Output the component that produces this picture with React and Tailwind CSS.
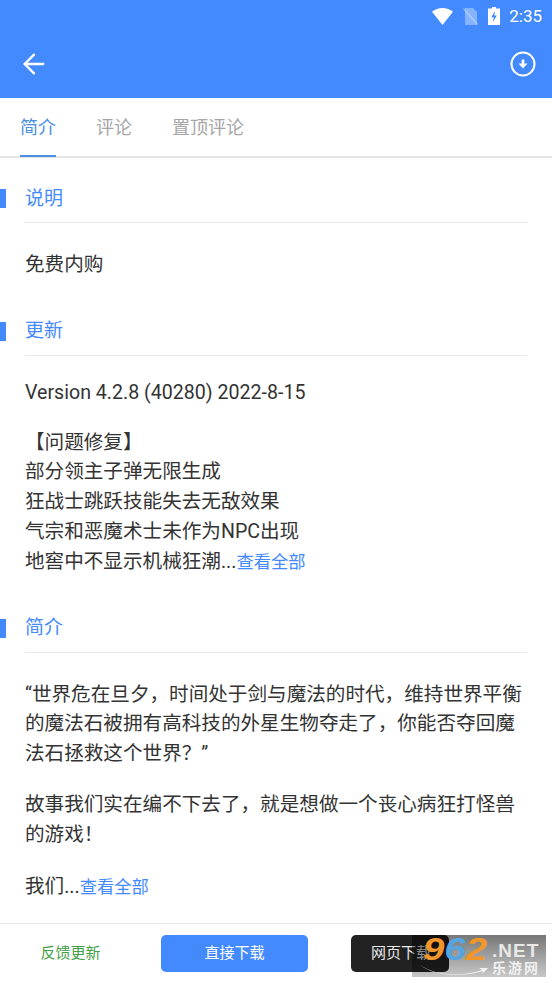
import { ArrowLeft } from 'lucide-react';

const FONT = 'font-["Roboto","Noto_Sans_CJK_SC",sans-serif]';

function Section({ title, children }) {
  return (
    <section>
      <div className="flex h-[49px] items-center pt-[2px]">
        <div className="h-[19px] w-[6px] bg-[#448aff]" />
        <h2 className="ml-[19px] text-[19px] leading-[30px] text-[#448aff] font-normal">{title}</h2>
      </div>
      <div className="mx-[25px] border-t border-[#e8e8e8]" />
      {children}
    </section>
  );
}

function MoreLink() {
  return <span className="text-[17.300px] leading-none text-[#448aff]">查看全部</span>;
}

function StatusIcons() {
  return (
    <div className="flex h-[32px] items-center justify-end pr-[10px] text-white">
      <svg width="21" height="17" viewBox="0 0 21 17" className="mr-[10px]">
        <path d="M0 3.800C2.900 1.300 6.500 0 10.500 0S18.100 1.300 21 3.800L10.500 17z" fill="white" />
      </svg>
      <svg width="15" height="17" viewBox="0 0 15 17" className="mr-[10px]">
        <path d="M2 0h8l4 4v13H2z" fill="white" fillOpacity="0.35" />
        <path d="M0.500 0.500l14 16" stroke="white" strokeOpacity="0.35" strokeWidth="1.5" />
      </svg>
      <svg width="12" height="18" viewBox="0 0 12 18" className="mr-[9px]">
        <path d="M4 0h4v1.500h4V18H0V1.500h4z" fill="white" />
        <path d="M7 4L3.300 10.200h2.400l-.8 4.800L8.800 8.400H6.300z" fill="#448aff" />
      </svg>
      <span className="font-['Roboto',sans-serif] text-[17px] leading-none">2:35</span>
    </div>
  );
}

export default function App() {
  return (
    <div className={`relative flex h-[983px] w-[552px] flex-col overflow-hidden bg-white ${FONT} text-[#333333]`}>
      <header className="h-[98px] bg-[#448aff]">
        <StatusIcons />
        <div className="flex h-[64px] items-center justify-between pl-[18px] pr-[15px]">
          <ArrowLeft size={32} color="white" strokeWidth={1.75} />
          <svg width="28" height="28" viewBox="0 0 28 28" fill="none">
            <circle cx="14" cy="14" r="11.500" stroke="white" strokeWidth="2" />
            <path d="M12.700 9.500h2.600v4H18.500L14 18.500l-4.500-5h3.200z" fill="white" />
          </svg>
        </div>
      </header>

      <nav className="flex h-[60px] items-stretch gap-[40px] border-b-2 border-[#e6e6e6] pl-[20px] text-[18px]">
        <div className="relative flex items-center text-[#4a90e2]">
          简介
          <div className="absolute -bottom-[1px] left-0 right-0 h-[2px] bg-[#4a90e2]" />
        </div>
        <div className="flex items-center text-[#a6a6a6]">评论</div>
        <div className="flex items-center text-[#a6a6a6]">置顶评论</div>
      </nav>

      <main className="flex-1 pt-[15px] text-[19.600px] leading-[29.800px]">
        <Section title="说明">
          <p className="mx-[25px] mt-[27px] mb-[26px]">免费内购</p>
        </Section>

        <Section title="更新">
          <div className="mx-[25px] mt-[22px] mb-[26px]">
            <p className="mb-[20px]">Version 4.2.8 (40280) 2022-8-15</p>
            <p>【问题修复】</p>
            <p>部分领主子弹无限生成</p>
            <p>狂战士跳跃技能失去无敌效果</p>
            <p>气宗和恶魔术士未作为NPC出现</p>
            <p>
              地窖中不显示机械狂潮...<MoreLink />
            </p>
          </div>
        </Section>

        <Section title="简介">
          <div className="mx-[25px] mt-[27px]">
            <p className="mb-[21.500px]">“世界危在旦夕，时间处于剑与魔法的时代，维持世界平衡的魔法石被拥有高科技的外星生物夺走了，你能否夺回魔法石拯救这个世界？”</p>
            <p className="mb-[21.500px]">故事我们实在编不下去了，就是想做一个丧心病狂打怪兽的游戏！</p>
            <p>
              我们...<MoreLink />
            </p>
          </div>
        </Section>
      </main>

      <footer className="flex h-[60px] items-start border-t border-[#ececec] pt-[11px] text-[15px]">
        <div className="flex h-[37px] w-[161px] items-center justify-center pr-[20px] text-[#43a047]">反馈更新</div>
        <button className="h-[37px] w-[147px] rounded-[5px] bg-[#448aff] text-white">直接下载</button>
        <button className="ml-[43px] flex h-[37px] w-[98px] items-center rounded-[5px] bg-[#222222] pl-[20px] text-[#e8e8e8]">网页下载</button>
      </footer>

      {/* watermark over the corner */}
      <div className="absolute left-[412px] top-[935px] h-[42px] w-[134px] bg-gradient-to-b from-[#00000088] to-[#00000038]">
        <div className="absolute left-[11px] top-[0px] origin-left scale-x-[1.2] font-['Liberation_Sans',sans-serif] text-[32px] font-bold italic leading-[28px]">
          <span className="text-[#f0962a]">9</span>
          <span className="text-[#55a5e2]">6</span>
          <span className="text-[#f0962a]">2</span>
        </div>
        <div className="absolute left-[80px] top-[5px] font-['Liberation_Sans',sans-serif] text-[19px] font-bold leading-[22px] tracking-[1px] text-[#e8e8e8]">.NET</div>
        <div className="absolute left-[80px] top-[25px] text-[14px] font-bold leading-[16px] tracking-[2px] text-[#f0f0f0]">乐游网</div>
        <svg width="70" height="12" viewBox="0 0 70 12" className="absolute left-[8px] top-[30px]">
          <path d="M0 0C16 11 42 12 62 5L59 3l9 0-6 6 1-3C42 12 16 12 0 0z" fill="#f2f2f2" />
        </svg>
      </div>
    </div>
  );
}
